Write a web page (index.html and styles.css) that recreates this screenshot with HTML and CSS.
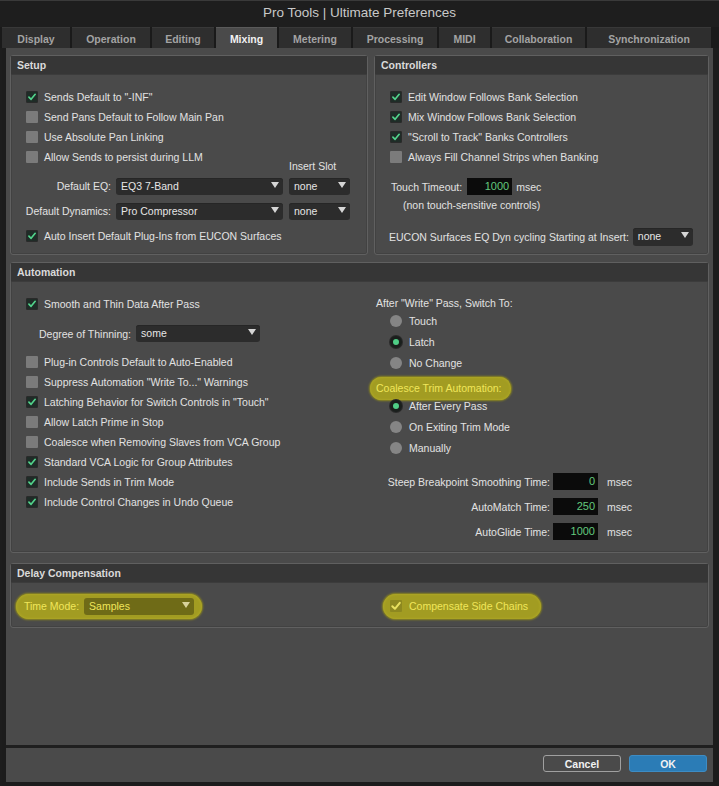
FILE: index.html
```html
<!DOCTYPE html>
<html>
<head>
<meta charset="utf-8">
<link rel="stylesheet" href="styles.css">
</head>
<body>
<div class="window">
  <div class="titlebar">Pro Tools | Ultimate Preferences</div>
  <div class="tabs">
    <div class="tab w-display">Display</div>
    <div class="tab w-operation">Operation</div>
    <div class="tab w-editing">Editing</div>
    <div class="tab active w-mixing">Mixing</div>
    <div class="tab w-metering">Metering</div>
    <div class="tab w-processing">Processing</div>
    <div class="tab w-midi">MIDI</div>
    <div class="tab w-collab">Collaboration</div>
    <div class="tab w-sync">Synchronization</div>
  </div>
  <div class="frame">
    <div class="main">
      <div class="top-row">
        <section class="panel setup">
          <div class="panel-head">Setup</div>
          <div class="panel-body setup-body">
            <div class="row"><span class="cb on"><svg viewBox="0 0 12 12"><path d="M2.3 6.2 L4.9 8.8 L9.8 2.8"/></svg></span>Sends Default to "-INF"</div>
            <div class="row"><span class="cb"></span>Send Pans Default to Follow Main Pan</div>
            <div class="row"><span class="cb"></span>Use Absolute Pan Linking</div>
            <div class="row"><span class="cb"></span>Allow Sends to persist during LLM</div>
            <div class="form-grid">
              <div></div><div></div><div class="slot-label">Insert Slot</div>
              <div class="flabel">Default EQ:</div>
              <div class="select">EQ3 7-Band<span class="tri"></span></div>
              <div class="select slot-sel">none<span class="tri"></span></div>
              <div class="flabel">Default Dynamics:</div>
              <div class="select">Pro Compressor<span class="tri"></span></div>
              <div class="select slot-sel">none<span class="tri"></span></div>
            </div>
            <div class="row auto-insert"><span class="cb on"><svg viewBox="0 0 12 12"><path d="M2.3 6.2 L4.9 8.8 L9.8 2.8"/></svg></span>Auto Insert Default Plug-Ins from EUCON Surfaces</div>
          </div>
        </section>
        <section class="panel controllers">
          <div class="panel-head">Controllers</div>
          <div class="panel-body ctrl-body">
            <div class="row"><span class="cb on"><svg viewBox="0 0 12 12"><path d="M2.3 6.2 L4.9 8.8 L9.8 2.8"/></svg></span>Edit Window Follows Bank Selection</div>
            <div class="row"><span class="cb on"><svg viewBox="0 0 12 12"><path d="M2.3 6.2 L4.9 8.8 L9.8 2.8"/></svg></span>Mix Window Follows Bank Selection</div>
            <div class="row"><span class="cb on"><svg viewBox="0 0 12 12"><path d="M2.3 6.2 L4.9 8.8 L9.8 2.8"/></svg></span>"Scroll to Track" Banks Controllers</div>
            <div class="row"><span class="cb"></span>Always Fill Channel Strips when Banking</div>
            <div class="touch-row">Touch Timeout:<span class="num touch-num">1000</span>msec</div>
            <div class="note">(non touch-sensitive controls)</div>
            <div class="eucon-row">EUCON Surfaces EQ Dyn cycling Starting at Insert:<div class="select eucon-sel">none<span class="tri"></span></div></div>
          </div>
        </section>
      </div>

      <section class="panel automation">
        <div class="panel-head">Automation</div>
        <div class="panel-body auto-body">
          <div class="auto-left">
            <div class="row"><span class="cb on"><svg viewBox="0 0 12 12"><path d="M2.3 6.2 L4.9 8.8 L9.8 2.8"/></svg></span>Smooth and Thin Data After Pass</div>
            <div class="thin-row">Degree of Thinning:<div class="select thin-sel">some<span class="tri"></span></div></div>
            <div class="row first-after"><span class="cb"></span>Plug-in Controls Default to Auto-Enabled</div>
            <div class="row"><span class="cb"></span>Suppress Automation "Write To..." Warnings</div>
            <div class="row"><span class="cb on"><svg viewBox="0 0 12 12"><path d="M2.3 6.2 L4.9 8.8 L9.8 2.8"/></svg></span>Latching Behavior for Switch Controls in "Touch"</div>
            <div class="row"><span class="cb"></span>Allow Latch Prime in Stop</div>
            <div class="row"><span class="cb"></span>Coalesce when Removing Slaves from VCA Group</div>
            <div class="row"><span class="cb on"><svg viewBox="0 0 12 12"><path d="M2.3 6.2 L4.9 8.8 L9.8 2.8"/></svg></span>Standard VCA Logic for Group Attributes</div>
            <div class="row"><span class="cb on"><svg viewBox="0 0 12 12"><path d="M2.3 6.2 L4.9 8.8 L9.8 2.8"/></svg></span>Include Sends in Trim Mode</div>
            <div class="row"><span class="cb on"><svg viewBox="0 0 12 12"><path d="M2.3 6.2 L4.9 8.8 L9.8 2.8"/></svg></span>Include Control Changes in Undo Queue</div>
          </div>
          <div class="auto-right">
            <div class="group-label">After "Write" Pass, Switch To:</div>
            <div class="radio-row"><span class="rb"></span>Touch</div>
            <div class="radio-row"><span class="rb on"></span>Latch</div>
            <div class="radio-row"><span class="rb"></span>No Change</div>
            <div class="hl-wrap"><span class="hl hl-coalesce">Coalesce Trim Automation:</span></div>
            <div class="radio-row"><span class="rb on"></span>After Every Pass</div>
            <div class="radio-row"><span class="rb"></span>On Exiting Trim Mode</div>
            <div class="radio-row"><span class="rb"></span>Manually</div>
            <div class="time-grid">
              <div class="tlabel">Steep Breakpoint Smoothing Time:</div><span class="num">0</span><div class="unit">msec</div>
              <div class="tlabel">AutoMatch Time:</div><span class="num">250</span><div class="unit">msec</div>
              <div class="tlabel">AutoGlide Time:</div><span class="num">1000</span><div class="unit">msec</div>
            </div>
          </div>
        </div>
      </section>

      <section class="panel delay">
        <div class="panel-head">Delay Compensation</div>
        <div class="panel-body delay-body">
          <div class="hl hl-time">Time Mode:<div class="select hl-sel">Samples<span class="tri"></span></div></div>
          <div class="hl hl-comp"><span class="cb hl-cb"><svg viewBox="0 0 12 12"><path d="M2.3 6.2 L4.9 8.8 L9.8 2.8"/></svg></span>Compensate Side Chains</div>
        </div>
      </section>
    </div>
    <div class="footer">
      <button class="btn cancel">Cancel</button>
      <button class="btn ok">OK</button>
    </div>
  </div>
</div>
</body>
</html>
```

FILE: styles.css
```css
* { box-sizing: border-box; }
html, body { margin: 0; padding: 0; }
body {
  width: 719px;
  height: 786px;
  background: #1d1d1d;
  font-family: "Liberation Sans", Arial, sans-serif;
  font-size: 10.5px;
  color: #e2e2e2;
  overflow: hidden;
}
.window {
  width: 719px;
  height: 786px;
  display: flex;
  flex-direction: column;
  background: #1d1d1d;
}
.titlebar {
  height: 27px;
  line-height: 24px;
  text-align: center;
  font-size: 13.5px;
  color: #c9c9c9;
  background: #1e1e1e;
  border-top: 1px solid #3a3a3a;
}
.tabs {
  height: 21px;
  display: flex;
  gap: 2px;
  padding-left: 2px;
  background: #1a1a1a;
}
.tab {
  height: 21px;
  line-height: 22px;
  text-align: center;
  font-weight: bold;
  font-size: 10.5px;
  color: #a3a3a3;
  background: #2e2e2e;
  border-top: 1px solid #383838;
}
.tab.active {
  background: #4a4a4a;
  color: #f2f2f2;
  border-top-color: #5a5a5a;
}
.w-display { width: 68px; }
.w-operation { width: 78px; }
.w-editing { width: 62px; }
.w-mixing { width: 61px; }
.w-metering { width: 72px; }
.w-processing { width: 84px; }
.w-midi { width: 51px; }
.w-collab { width: 93px; }
.w-sync { width: 124px; }

.frame {
  flex: 1;
  display: flex;
  flex-direction: column;
  margin-left: 2px;
  border-left: 4px solid #1c1c1c;
  border-right: 6px solid #1c1c1c;
  border-bottom: 4px solid #1c1c1c;
  background: #4a4a4a;
}
.main {
  flex: 1;
  padding: 7px 4px 0 4px;
  display: flex;
  flex-direction: column;
}
.top-row {
  display: grid;
  grid-template-columns: 358px 335px;
  gap: 6px;
  height: 200px;
}
.panel {
  border: 1px solid #606060;
  border-radius: 3px;
  background: #4a4a4a;
  display: flex;
  flex-direction: column;
  box-shadow: inset 0 0 0 1px #424242;
}
.panel-head {
  height: 19px;
  line-height: 19px;
  padding-left: 6px;
  font-weight: bold;
  color: #dadada;
  background: #363636;
  border-bottom: 1px solid #3c3c3c;
}
.panel-body {
  flex: 1;
  padding: 12px 15px 0 15px;
}
.row {
  height: 20px;
  display: flex;
  align-items: center;
  white-space: nowrap;
}
.cb {
  width: 12px;
  height: 12px;
  margin-right: 6px;
  background: #7b7b7b;
  border-radius: 1px;
  flex: none;
  display: inline-block;
}
.cb.on {
  background: #1f2c27;
  border: 1px solid #2a2a2a;
}
.cb svg {
  display: block;
  width: 100%;
  height: 100%;
}
.cb path {
  fill: none;
  stroke: #52d48c;
  stroke-width: 2;
  stroke-linecap: round;
  stroke-linejoin: round;
}
.select {
  position: relative;
  height: 17px;
  line-height: 17px;
  padding-left: 5px;
  background: #2c2c2c;
  border-radius: 3px;
  color: #e6e6e6;
  white-space: nowrap;
  box-shadow: inset 0 1px 0 #262626;
}
.tri {
  position: absolute;
  right: 4px;
  top: 4px;
  width: 0;
  height: 0;
  border-left: 4px solid transparent;
  border-right: 4px solid transparent;
  border-top: 6px solid #d6d6d6;
}
.form-grid {
  margin-left: -9px;
  margin-top: -7px;
  display: grid;
  grid-template-columns: 94px 167px 62px;
  grid-template-rows: 12px 17px 19px;
  column-gap: 5px;
  row-gap: 6px;
  align-items: end;
}
.form-grid .select { height: 17px; }
.slot-sel { margin-left: 1px; }
.slot-label {
  line-height: 12px;
  padding-left: 1px;
}
.flabel {
  text-align: right;
  line-height: 17px;
  white-space: nowrap;
}
.auto-insert { margin-top: 6px; }

.ctrl-body { padding-left: 15px; }
.touch-row {
  margin-top: 11px;
  height: 17px;
  display: flex;
  align-items: center;
  padding-left: 1px;
}
.num {
  display: inline-block;
  width: 45px;
  height: 17px;
  line-height: 17px;
  text-align: right;
  padding-right: 3px;
  background: #0b0b0b;
  color: #63c97e;
  font-size: 11px;
}
.touch-num { margin: 0 4px 0 5px; }
.note {
  margin-top: 4px;
  line-height: 12px;
  padding-left: 13px;
}
.eucon-row {
  margin-top: 17px;
  margin-left: -1px;
  display: flex;
  align-items: center;
  white-space: nowrap;
}
.eucon-sel {
  width: 61px;
  height: 18px;
  margin-left: 4px;
}

.automation {
  margin-top: 7px;
  height: 291px;
}
.auto-body {
  display: grid;
  grid-template-columns: 350px 1fr;
  padding-top: 12px;
}
.thin-row {
  margin-top: 11px;
  padding-left: 13px;
  display: flex;
  align-items: center;
  height: 17px;
}
.thin-sel {
  width: 124px;
  margin-left: 5px;
}
.first-after { margin-top: 10px; }
.group-label {
  margin-top: 2px;
  line-height: 14px;
}
.radio-row {
  height: 21px;
  display: flex;
  align-items: center;
  padding-left: 14px;
}
.rb {
  width: 12px;
  height: 12px;
  border-radius: 50%;
  background: #858585;
  margin-right: 7px;
  flex: none;
}
.rb.on {
  background: #4fce86;
  border: 3px solid #1a1f1c;
  box-shadow: 0 0 0 1px #2a2a2a;
}
.hl-wrap {
  height: 22px;
  display: flex;
  align-items: flex-start;
  margin-left: -6px;
}
.hl {
  background: #a29c22;
  color: #f0e65a;
  border-radius: 13px;
  box-shadow: 0 0 2px 1px #8f8a1e, inset 0 0 3px #b8b12a;
}
.hl-coalesce {
  margin-top: 4px;
  height: 23px;
  line-height: 23px;
  padding: 0 10px 0 6px;
}
.time-grid {
  margin-top: 15px;
  display: grid;
  grid-template-columns: 177px 45px auto;
  grid-template-rows: 17px 17px 17px;
  column-gap: 0;
  row-gap: 8px;
  align-items: center;
}
.tlabel {
  text-align: right;
  white-space: nowrap;
  padding-right: 3px;
}
.unit { padding-left: 9px; }

.delay {
  margin-top: 10px;
  height: 65px;
}
.delay-body {
  display: flex;
  align-items: center;
  padding: 2px 5px 0 5px;
}
.hl-time {
  width: 186px;
  height: 25px;
  display: flex;
  align-items: center;
  padding-left: 8px;
  white-space: nowrap;
}
.hl-sel {
  width: 110px;
  margin-left: 5px;
  background: #6f6b17;
  color: #f0e65a;
  box-shadow: none;
}
.hl-sel .tri { border-top-color: #d8d29a; }
.hl-comp {
  margin-left: 181px;
  width: 158px;
  height: 25px;
  display: flex;
  align-items: center;
  padding-left: 7px;
  white-space: nowrap;
}
.hl-cb {
  background: #8d8820;
  margin-right: 7px;
}
.hl-cb path { stroke: #e8e060; }

.footer {
  height: 37px;
  border-top: 3px solid #1f1f1f;
  display: flex;
  justify-content: flex-end;
  align-items: flex-start;
  padding: 7px 6px 0 0;
  gap: 8px;
}
.btn {
  width: 78px;
  height: 17px;
  padding: 0;
  border-radius: 3px;
  font-family: "Liberation Sans", Arial, sans-serif;
  font-weight: bold;
  font-size: 10.5px;
  color: #f2f2f2;
}
.cancel {
  background: #4a4a4a;
  border: 1px solid #a0a0a0;
}
.ok {
  background: #2b7cb6;
  border: 1px solid #3d8cc4;
}
```
